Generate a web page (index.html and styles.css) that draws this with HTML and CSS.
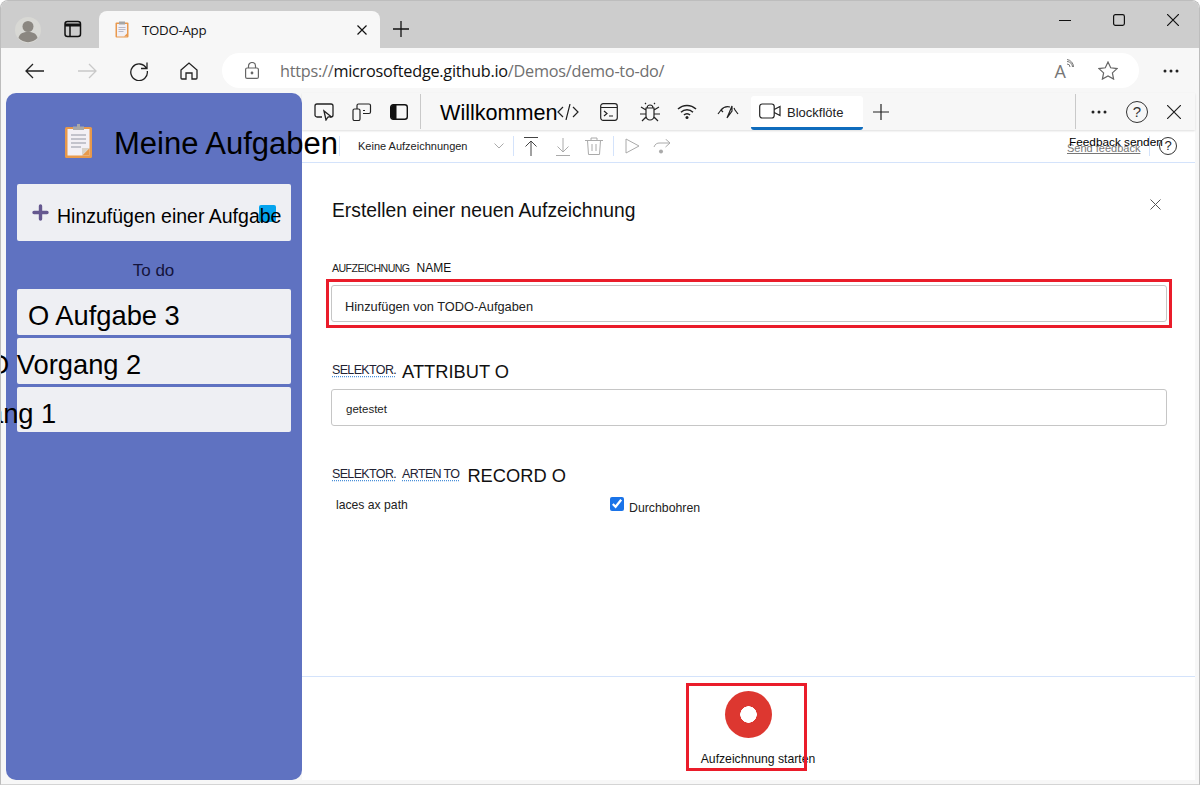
FILE: index.html
```html
<!DOCTYPE html>
<html lang="de">
<head>
<meta charset="utf-8">
<title>TODO-App</title>
<link rel="stylesheet" href="styles.css">
</head>
<body>
<div class="window">
  <header class="tabstrip">
    <div class="avatar"><svg viewBox="0 0 26 26" width="26" height="26"><circle cx="13" cy="13" r="13" fill="#d8d8d4"/><circle cx="13" cy="9.500" r="5.500" fill="#8b8781"/><path d="M3.500 21c1-4.500 4.500-6 9.500-6s8.500 1.500 9.500 6a13 13 0 0 1-19 0z" fill="#8b8781"/></svg></div>
    <div class="tabs-btn"><svg viewBox="0 0 18 18" width="18" height="18" fill="none" stroke="#111" stroke-width="1.500"><rect x="1" y="1.500" width="15.500" height="15" rx="2.500"/><path d="M1 5h15.500" stroke-width="3"/><path d="M6 5v11.500"/></svg></div>
    <div class="tab">
      <svg class="tab-icon" viewBox="0 0 14 17" width="14" height="17"><rect x=".5" y="1.500" width="13" height="15" rx="1" fill="#e9994e"/><rect x="2" y="3" width="10" height="12.500" fill="#f2f0f5"/><path d="M9 15.500h3v-3z" fill="#e9994e"/><rect x="4" y=".5" width="6" height="3" fill="#a5a5a5"/><path d="M3.500 6.500h7M3.500 8.500h7M3.500 10.500h5" stroke="#b9b9c6"/></svg>
      <span class="tab-title">TODO-App</span>
      <svg class="tab-close" viewBox="0 0 10 10" width="10" height="10" fill="none" stroke="#111" stroke-width="1.200"><path d="M.5.500l9 9M9.500.500l-9 9"/></svg>
    </div>
    <svg class="new-tab" viewBox="0 0 16 16" width="16" height="16" fill="none" stroke="#111" stroke-width="1.300"><path d="M8 0v16M0 8h16"/></svg>
    <div class="win-controls">
      <svg viewBox="0 0 12 12" width="12" height="12" fill="none" stroke="#111" stroke-width="1.200"><path d="M0 6.500h12"/></svg>
      <svg viewBox="0 0 12 12" width="12" height="12" fill="none" stroke="#111" stroke-width="1.200"><rect x=".6" y=".6" width="10.800" height="10.800" rx="1.800"/></svg>
      <svg viewBox="0 0 12 12" width="12" height="12" fill="none" stroke="#111" stroke-width="1.200"><path d="M0 0l12 12M12 0L0 12"/></svg>
    </div>
  </header>

  <nav class="toolbar">
    <svg class="nav-btn" viewBox="0 0 20 16" width="20" height="16" fill="none" stroke="#222" stroke-width="1.300"><path d="M19 8H1M8 1L1 8l7 7"/></svg>
    <svg class="nav-btn off" viewBox="0 0 20 16" width="20" height="16" fill="none" stroke="#c9c9c9" stroke-width="1.300"><path d="M1 8h18M12 1l7 7-7 7"/></svg>
    <svg class="nav-btn reload" viewBox="0 0 20 20" width="20" height="20" fill="none" stroke="#222" stroke-width="1.300"><path d="M17.500 7.500A8.300 8.300 0 1 0 18.300 10M18 1.500v6h-6"/></svg>
    <svg class="nav-btn home" viewBox="0 0 18 18" width="18" height="18" fill="none" stroke="#222" stroke-width="1.300"><path d="M1 8l8-7 8 7v8a1 1 0 0 1-1 1h-4v-6H6v6H2a1 1 0 0 1-1-1z"/></svg>
    <div class="addressbar">
      <svg class="lock" viewBox="0 0 14 17" width="14" height="17" fill="none" stroke="#666" stroke-width="1.200"><rect x=".6" y="6" width="12.800" height="10.400" rx="1.500"/><path d="M3.500 6V4a3.500 3.500 0 0 1 7 0v2"/><circle cx="7" cy="11" r=".8" fill="#666"/></svg>
      <span class="url"><span class="url-dim">https://</span>microsoftedge.github.io<span class="url-dim">/Demos/demo-to-do/</span></span>
      <span class="read-aloud">A<svg viewBox="0 0 8 10" width="8" height="10" fill="none" stroke="#777"><path d="M1 5a3 3 0 0 1 3 3M1 2.500a5.500 5.500 0 0 1 5.500 5.500M1 .5A7.500 7.500 0 0 1 7.500 8"/></svg></span>
      <svg class="star" viewBox="0 0 20 19" width="20" height="19" fill="none" stroke="#666" stroke-width="1.200"><path d="M10 1l2.700 5.800 6.300.8-4.600 4.300 1.200 6.200L10 15l-5.600 3.100 1.200-6.200L1 7.600l6.300-.8z"/></svg>
    </div>
    <svg class="more" viewBox="0 0 16 4" width="16" height="4" fill="#222"><circle cx="2" cy="2" r="1.500"/><circle cx="8" cy="2" r="1.500"/><circle cx="14" cy="2" r="1.500"/></svg>
  </nav>

  <main class="content">
    <section class="app">
      <div class="app-head">
        <svg class="app-logo" viewBox="0 0 28 34" width="28" height="34"><rect x="0" y="3" width="27" height="31" rx="1.500" fill="#e8994a"/><rect x="2.500" y="5" width="22" height="26.500" fill="#f3f0f5"/><path d="M17 31.500h7.500V24z" fill="#e8994a"/><path d="M17 31.500V24h7.500z" fill="#d9d2c8"/><path d="M8 6V2.500h4V0h3v2.500h4V6z" fill="#a9a9a9"/><path d="M6 11h15M6 15h15M6 19h15M6 23h10" stroke="#b4b4bf" stroke-width="1.400"/></svg>
        <h1 class="app-title">Meine Aufgaben</h1>
      </div>
      <div class="add-task">
        <svg class="plus" viewBox="0 0 17 17" width="17" height="17" fill="none" stroke="#65588f" stroke-width="3.400" stroke-linecap="round"><path d="M8.500 2v13M2 8.500h13"/></svg>
        <span class="add-label">Hinzufügen einer Aufgabe</span>
        <span class="emoji-badge"></span>
      </div>
      <p class="todo-label">To do</p>
      <ul class="tasks">
        <li class="task"><span class="t1">O Aufgabe 3</span></li>
        <li class="task"><span class="t2">O Vorgang 2</span></li>
        <li class="task"><span class="t3">O Vorgang 1</span></li>
      </ul>
    </section>

    <section class="devtools">
      <div class="dt-tabs">
        <svg class="dt-ic inspect" viewBox="0 0 20 18" width="20" height="18" fill="none" stroke="#222" stroke-width="1.300"><path d="M8 14H3a2 2 0 0 1-2-2V3a2 2 0 0 1 2-2h14a2 2 0 0 1 2 2v9a2 2 0 0 1-2 2h-1"/><path d="M10 8l2 9 2-3 3-.5z"/></svg>
        <svg class="dt-ic device" viewBox="0 0 20 18" width="20" height="18" fill="none" stroke="#222" stroke-width="1.200"><rect x="1" y="6" width="7" height="11.500" rx="1.500"/><path d="M5 6V2.500A1.500 1.500 0 0 1 6.500 1H17a1.500 1.500 0 0 1 1.500 1.500V9A1.500 1.500 0 0 1 17 10.500h-6M11 7.500h2"/></svg>
        <svg class="dt-ic dock" viewBox="0 0 18 16" width="18" height="16"><rect x=".7" y=".7" width="16.600" height="14.600" rx="2.500" fill="none" stroke="#111" stroke-width="1.400"/><path d="M3 1h3.500v14H3a2 2 0 0 1-2-2V3a2 2 0 0 1 2-2z" fill="#111"/></svg>
        <span class="dt-sep"></span>
        <span class="welcome">Willkommen</span>
        <svg class="dt-ic code" viewBox="0 0 22 16" width="22" height="16" fill="none" stroke="#222" stroke-width="1.200"><path d="M6 3L1 8l5 5M16 3l5 5-5 5M13 0L9 16"/></svg>
        <svg class="dt-ic console" viewBox="0 0 18 18" width="18" height="18" fill="none" stroke="#222" stroke-width="1.200"><rect x=".7" y=".7" width="16.600" height="16.600" rx="2.500"/><path d="M1 4.500h16M4 8l3 2.500L4 13M9 13h4"/></svg>
        <svg class="dt-ic bug" viewBox="0 0 22 20" width="22" height="20" fill="none" stroke="#222" stroke-width="1.200"><path d="M7 6h8v8a4 4 0 0 1-8 0zM8 6a3 3 0 0 1 6 0M7 8L2 5M15 8l5-3M7 12H1M15 12h6M7 15l-4 4M15 15l4 4M7 2L6 1M15 2l1-1"/></svg>
        <svg class="dt-ic wifi" viewBox="0 0 20 15" width="20" height="15" fill="none" stroke="#222" stroke-width="1.500"><path d="M1 5a13 13 0 0 1 18 0M4 8.200a8.500 8.500 0 0 1 12 0M7 11a4 4 0 0 1 6 0"/><circle cx="10" cy="13.500" r="1.500" fill="#222" stroke="none"/></svg>
        <svg class="dt-ic perf" viewBox="0 0 22 14" width="22" height="14" fill="none" stroke="#222" stroke-width="1.200"><path d="M1 9l3-4a9 9 0 0 1 9-3M17 3l1 2 3 4M4 5l2 2M15 1l-5 12 5-7z"/></svg>
        <div class="dt-tab-active">
          <svg viewBox="0 0 22 16" width="22" height="16" fill="none" stroke="#222" stroke-width="1.200"><rect x=".7" y="1" width="14.500" height="14" rx="2.500"/><path d="M15.200 6.500L21 3.500v9l-5.800-3"/></svg>
          <span>Blockflöte</span>
        </div>
        <svg class="dt-ic dt-plus" viewBox="0 0 16 16" width="16" height="16" fill="none" stroke="#222" stroke-width="1.200"><path d="M8 0v16M0 8h16"/></svg>
        <span class="dt-sep right"></span>
        <svg class="dt-more" viewBox="0 0 16 4" width="16" height="4" fill="#222"><circle cx="2" cy="2" r="1.500"/><circle cx="8" cy="2" r="1.500"/><circle cx="14" cy="2" r="1.500"/></svg>
        <span class="dt-help">?</span>
        <svg class="dt-close" viewBox="0 0 14 14" width="14" height="14" fill="none" stroke="#222" stroke-width="1.200"><path d="M0 0l14 14M14 0L0 14"/></svg>
      </div>

      <div class="rec-bar">
        <span class="rb-sep first"></span>
        <span class="rec-select">Keine Aufzeichnungen</span>
        <svg class="rb-chev" viewBox="0 0 10 6" width="10" height="6" fill="none" stroke="#aaa"><path d="M.5.500L5 5 9.500.500"/></svg>
        <span class="rb-sep"></span>
        <svg class="rb-up" viewBox="0 0 14 19" width="14" height="19" fill="none" stroke="#444"><path d="M0 .5h14M7 4v15M1.500 9.500L7 4l5.500 5.500"/></svg>
        <svg class="rb-down" viewBox="0 0 14 19" width="14" height="19" fill="none" stroke="#aaa"><path d="M0 18.500h14M7 1v14M1.500 9.500L7 15l5.500-5.500"/></svg>
        <svg class="rb-trash" viewBox="0 0 18 19" width="18" height="19" fill="none" stroke="#aaa"><path d="M0 3.500h18M6 3.500V1h6v2.500M2.500 3.500l1 14h11l1-14M7 7v7M11 7v7"/></svg>
        <span class="rb-sep s3"></span>
        <svg class="rb-play" viewBox="0 0 15 16" width="15" height="16" fill="none" stroke="#aaa"><path d="M1 1l13 7-13 7z"/></svg>
        <svg class="rb-step" viewBox="0 0 18 15" width="18" height="15" fill="none" stroke="#aaa"><path d="M1 8a6 6 0 0 1 6-4h10M12.500 0L17 4l-4.500 4"/><circle cx="8" cy="12.500" r="2" fill="#aaa" stroke="none"/></svg>
        <div class="feedback">
          <span class="feedback-en">Send feedback</span>
          <span class="feedback-de">Feedback senden</span>
        </div>
        <span class="rb-sep s4"></span>
        <span class="rb-help">?</span>
      </div>

      <div class="rec-form">
        <div class="form-head">
          <h2>Erstellen einer neuen Aufzeichnung</h2>
          <svg viewBox="0 0 11 11" width="11" height="11" fill="none" stroke="#555"><path d="M.5.500l10 10M10.500.500l-10 10"/></svg>
        </div>
        <div class="label-row l1"><span class="small">AUFZEICHNUNG</span><span class="name">NAME</span></div>
        <div class="field f1"><span class="val1">Hinzufügen von TODO-Aufgaben</span><span class="redbox rb-a"></span></div>
        <div class="label-row l2"><span class="sel">SELEKTOR.</span><span class="big">ATTRIBUT O</span></div>
        <div class="field f2"><span class="val2">getestet</span></div>
        <div class="label-row l3"><span class="sel">SELEKTOR.</span><span class="sel s2">ARTEN TO</span><span class="big b2">RECORD O</span></div>
        <div class="types">
          <span class="types-val">laces ax path</span>
          <label class="pierce"><input type="checkbox" checked><span>Durchbohren</span></label>
        </div>
      </div>

      <footer class="rec-foot">
        <span class="rec-btn"></span>
        <span class="rec-text">Aufzeichnung starten</span>
        <span class="redbox rb-b"></span>
      </footer>
    </section>
  </main>
</div>
</body>
</html>
```

FILE: styles.css
```css
* { box-sizing: border-box; }
html, body { margin: 0; height: 100%; overflow: hidden; background: #fff; }
body { font-family: "Liberation Sans", Arial, sans-serif; color: #000; }
h1, h2, p, ul { margin: 0; padding: 0; }
svg { display: block; flex: none; }

.window {
  width: 1200px; height: 785px; display: flex; flex-direction: column;
  background: #f7f7f7; border: 1px solid #bdbdbd; border-bottom-color: #d4d4d4;
  border-radius: 8px 8px 0 0; overflow: hidden;
}

.tabstrip { height: 47px; flex: none; background: #cdcdcd; display: flex; align-items: flex-end; position: relative; }
.avatar { margin: 0 0 1px 14px; padding-bottom: 4px; }
.tabs-btn { margin: 0 0 10px 23px; }
.tab {
  width: 281px; height: 37px; margin-left: 17px; background: #f7f7f7; border-radius: 8px 8px 0 0;
  display: flex; align-items: center; padding: 0 13px 0 16px;
}
.tab-title { margin-left: 13px; font: 13.300px "Open Sans", sans-serif; letter-spacing: -.3px; flex: 1; color: #111; }
.new-tab { margin: 0 0 11px 13px; }
.win-controls { margin-left: auto; display: flex; gap: 42px; padding: 0 20px 22px 0; align-self: flex-end; }

.toolbar { height: 45px; flex: none; display: flex; align-items: center; padding: 0 0 0 24px; background: #f7f7f7; }
.nav-btn { margin-right: 32px; }
.nav-btn.off { margin-right: 32px; }
.nav-btn.reload { margin-right: 31px; }
.nav-btn.home { margin-right: 24px; }
.addressbar {
  width: 917px; height: 35px; background: #fff; border-radius: 18px; display: flex; align-items: center; padding: 0 21px 0 23px;
}
.url { margin-left: 21px; font: 16.250px "Open Sans", sans-serif; color: #111; letter-spacing: -.25px; flex: 1; white-space: nowrap; }
.url-dim { color: #707070; }
.read-aloud { display: flex; align-items: flex-start; font: 18px "Open Sans", sans-serif; color: #777; margin-right: 24px; }
.more { margin-left: 24px; }

.content { flex: 1; display: flex; min-height: 0; padding: 0 4px 4px 5px; }

.app {
  width: 296px; height: 687px; background: #5f72c1; border-radius: 10px; flex: none; position: relative; z-index: 2;
  padding: 0 11px;
}
.app-head { display: flex; align-items: flex-start; height: 91px; padding: 31px 0 0 48px; }
.app-title { font-size: 31px; font-weight: 400; margin-left: 21px; line-height: 37px; white-space: nowrap; margin-top: 1px; }
.add-task {
  height: 57px; background: #eeeff3; border-radius: 2px; display: flex; align-items: center; position: relative; padding: 7px 0 0 15px; z-index: 0;
}
.plus { margin-top: -7px; }
.add-label { margin-left: 8px; font-size: 19.500px; white-space: nowrap; }
.emoji-badge { position: absolute; left: 242px; top: 21px; width: 17px; height: 17px; background: #05a4ee; border-radius: 2px; z-index: -1; }
.todo-label { text-align: center; font-size: 17px; color: #14143c; height: 48px; padding-top: 21px; line-height: 18px; margin-left: -1px; }
.tasks { list-style: none; display: flex; flex-direction: column; gap: 3px; }
.task { height: 46px; background: #eeeff3; border-radius: 2px; font-size: 27.300px; line-height: 30px; padding-top: 12px; white-space: nowrap; }
.task:last-child { height: 45px; }
.t1 { margin-left: 11px; }
.t2 { margin-left: -29px; }
.t3 { margin-left: -114px; }

.devtools { flex: 1; display: flex; flex-direction: column; background: #fff; min-width: 0; }
.dt-tabs { height: 37px; background: #f7f7f7; display: flex; align-items: center; position: relative; box-shadow: 0 1px 2px #ddd; z-index: 1; flex: none; }
.inspect { margin-left: 12px; }
.device { margin-left: 18px; }
.dock { margin-left: 18px; }
.dt-sep { width: 1px; height: 35px; background: #c9c9c9; margin-left: 12px; }
.dt-sep.right { margin-left: 186px; }
.welcome { font-size: 21.600px; margin-left: 19px; width: 118px; white-space: nowrap; padding-top: 3px; }
.code { margin-left: -1px; position: relative; }
.console { margin-left: 21px; }
.bug { margin-left: 21px; }
.wifi { margin-left: 16px; }
.perf { margin-left: 20px; }
.dt-tab-active {
  width: 112px; height: 34px; margin-left: 12px; margin-top: 2px; background: #fff; border-bottom: 3px solid #0f6cbd;
  border-radius: 3px; display: flex; align-items: center; padding: 0 0 0 8px; font-size: 13px; color: #222;
}
.dt-tab-active span { margin-left: 6px; padding-top: 3px; }
.dt-plus { margin-left: 10px; }
.dt-more { margin-left: 15px; }
.dt-help { margin-left: 19px; width: 22px; height: 22px; border: 1.300px solid #333; border-radius: 50%; text-align: center; font-size: 15px; line-height: 20px; color: #333; flex: none; }
.dt-close { margin-left: 19px; }

.rec-bar { height: 33px; flex: none; display: flex; align-items: center; border-bottom: 1px solid #d4e3fb; position: relative; }
.rb-sep { width: 1px; height: 20px; background: #d4e3fb; flex: none; }
.rb-sep.first { margin-left: 37px; }
.rec-select { font-size: 11px; margin-left: 18px; width: 136px; white-space: nowrap; color: #222; }
.rb-chev + .rb-sep { margin-left: 9px; }
.rb-up { margin-left: 10px; }
.rb-down { margin-left: 18px; }
.rb-trash { margin-left: 15px; }
.rb-sep.s3 { margin-left: 10px; }
.rb-play { margin-left: 11px; }
.rb-step { margin-left: 13px; }
.feedback { margin-left: 396px; width: 82px; height: 24px; position: relative; flex: none; }
.feedback-en { position: absolute; left: 0; top: 8px; font-size: 11px; color: #777; text-decoration: underline; white-space: nowrap; }
.feedback-de { position: absolute; left: 2px; top: 1px; font-size: 11.800px; white-space: nowrap; }
.rb-help { margin-left: 9px; width: 18px; height: 18px; border: 1px solid #333; border-radius: 50%; text-align: center; font-size: 13px; line-height: 16px; color: #222; flex: none; }

.rec-form { flex: 1; padding: 0 28px 0 29px; position: relative; min-height: 0; }
.form-head { display: flex; justify-content: space-between; height: 96px; padding: 36px 7px 0 0; align-items: flex-start; }
.form-head h2 { font-size: 19.300px; font-weight: 400; line-height: 23px; color: #111; margin-left: 1px; }
.form-head svg { margin-right: -1px; }
.label-row { display: flex; align-items: baseline; white-space: nowrap; padding-left: 1px; }
.l1 { height: 26px; padding-top: 1px; }
.small { font-size: 10.600px; letter-spacing: -.55px; color: #222; }
.name { font-size: 12px; margin-left: 7px; color: #111; padding-top: 1px; }
.field { height: 37px; border: 1px solid #c6c6c6; border-radius: 3px; display: flex; align-items: center; position: relative; }
.val1 { margin-left: 13px; font-size: 12.800px; color: #222; padding-top: 5px; }
.val2 { margin-left: 14px; font-size: 11.500px; color: #222; padding-top: 2px; }
.l2 { margin-top: 30px; height: 37px; padding-top: 2px; align-items: center; }
.sel { font-size: 12.500px; letter-spacing: -.65px; color: #223; margin-bottom: 3px; text-decoration: underline dotted #4a90d9; text-underline-offset: 2px; }
.big { font-size: 18.300px; margin-left: 6px; color: #111; }
.l3 { margin-top: 34px; height: 34px; padding-bottom: 3px; align-items: center; }
.s2 { margin-left: 6px; }
.b2 { margin-left: 8px; }
.types { display: flex; align-items: center; padding-left: 5px; height: 22px; }
.types-val { font-size: 12.200px; color: #222; width: 274px; }
.pierce { display: flex; align-items: center; font-size: 12.300px; color: #222; }
.pierce input { width: 14px; height: 14px; margin: 0 5px 2px 0; accent-color: #1a73e8; }
.pierce span { padding-top: 5px; }

.rec-foot { height: 104px; flex: none; border-top: 1px solid #d4e3fb; display: flex; flex-direction: column; align-items: center; position: relative; padding: 14px 0 0 0; }
.rec-btn { width: 47px; height: 47px; border-radius: 50%; background: radial-gradient(circle, #fff 0 8px, #dd3730 8.500px); }
.rec-text { font-size: 12.200px; margin-top: 14px; margin-left: 19px; color: #111; white-space: nowrap; }

.redbox { position: absolute; border: 3px solid #ea1c2a; pointer-events: none; }
.rb-a { left: -6px; right: -6px; top: -7px; bottom: -7px; }
.rb-b { left: 384px; width: 121px; top: 6px; height: 88px; }
```
